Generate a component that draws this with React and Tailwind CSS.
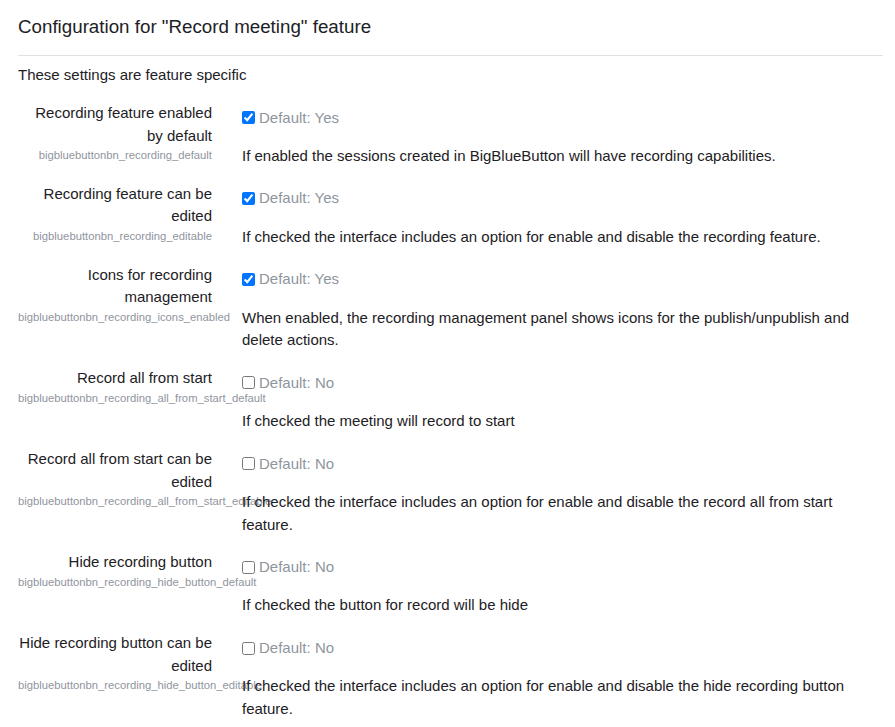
import React from "react";

const rows = [
  { label: ["Recording feature enabled", "by default"], name: "bigbluebuttonbn_recording_default", checked: true, desc: "If enabled the sessions created in BigBlueButton will have recording capabilities." },
  { label: ["Recording feature can be", "edited"], name: "bigbluebuttonbn_recording_editable", checked: true, desc: "If checked the interface includes an option for enable and disable the recording feature." },
  { label: ["Icons for recording", "management"], name: "bigbluebuttonbn_recording_icons_enabled", checked: true, desc: "When enabled, the recording management panel shows icons for the publish/unpublish and delete actions." },
  { label: ["Record all from start"], name: "bigbluebuttonbn_recording_all_from_start_default", checked: false, desc: "If checked the meeting will record to start" },
  { label: ["Record all from start can be", "edited"], name: "bigbluebuttonbn_recording_all_from_start_editable", checked: false, desc: "If checked the interface includes an option for enable and disable the record all from start feature." },
  { label: ["Hide recording button"], name: "bigbluebuttonbn_recording_hide_button_default", checked: false, desc: "If checked the button for record will be hide" },
  { label: ["Hide recording button can be", "edited"], name: "bigbluebuttonbn_recording_hide_button_editable", checked: false, desc: "If checked the interface includes an option for enable and disable the hide recording button feature." },
];

export default function App() {
  return (
    <div className="bg-white min-h-screen text-[#1d2125]" style={{ fontFamily: '"Liberation Sans", Arial, sans-serif' }}>
      <div className="pl-[18px] pr-[12px] pt-[12px]">
        <h3 className="text-[18.75px] leading-[30px] pb-[13px] border-b border-[#dee2e6]">Configuration for "Record meeting" feature</h3>
        <div className="text-[15px] leading-[22px] mt-[8px] mb-[16px]">These settings are feature specific</div>
        {rows.map((r, i) => (
          <div key={i} className="flex mb-[15.4px]">
            <div className="w-[194px] shrink-0 text-right">
              <div className="text-[15px] leading-[22.5px]">
                {r.label.map((l, j) => (
                  <div key={j}>{l}</div>
                ))}
              </div>
              <div className="text-[11.25px] leading-[16px] text-[#8f959e] whitespace-nowrap">{r.name}</div>
            </div>
            <div className="relative ml-[30px] flex-1">
              <div className="flex items-center h-[22.5px] mt-[4.5px] text-[15px]">
                <input type="checkbox" defaultChecked={r.checked} className="m-0 w-[13px] h-[13px] mr-[4px]" />
                <span className="text-[#8f959e]">Default: {r.checked ? "Yes" : "No"}</span>
              </div>
              <div className="text-[15px] leading-[22.5px] mt-[16px]">{r.desc}</div>
            </div>
          </div>
        ))}
      </div>
    </div>
  );
}
